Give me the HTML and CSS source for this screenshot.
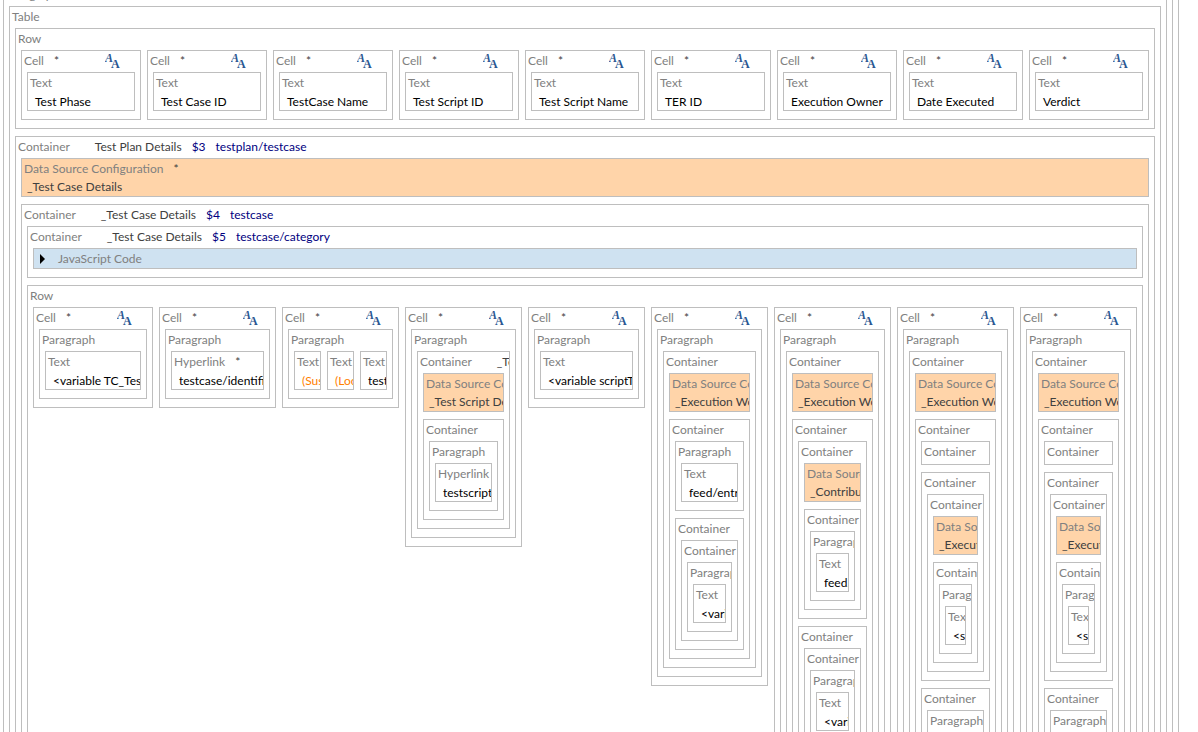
FILE: index.html
```html
<!DOCTYPE html>
<html lang="en">
  <head>
    <meta charset="UTF-8" />
    <meta name="viewport" content="width=device-width, initial-scale=1.0" />
    <title>Document Template</title>
    <link rel="stylesheet" href="styles.css">
  </head>
  <body>
    <svg class="defs" aria-hidden="true">
      <symbol id="style-icon" viewBox="0 0 16 16">
        <text x="0" y="8" class="glyph-small">A</text>
        <text x="6" y="14" class="glyph-big">A</text>
      </symbol>
    </svg>

    <main class="template">
      <div class="box">
        <div class="head"><span>Container</span></div>
        <div class="box">
          <div class="head"><span>Container</span></div>
          <div class="box">
            <div class="head"><span>Paragraph</span></div>
            <div class="box">
              <div class="head"><span>Table</span></div>

              <!-- header row -->
              <div class="box">
                <div class="head"><span>Row</span></div>
                <div class="cells">
                  <div class="box cell">
                    <div class="head"><span>Cell</span><span class="star">*</span><svg class="icon"><use href="#style-icon" /></svg></div>
                    <div class="box text"><div class="head"><span>Text</span></div><p class="value">Test Phase</p></div>
                  </div>
                  <div class="box cell">
                    <div class="head"><span>Cell</span><span class="star">*</span><svg class="icon"><use href="#style-icon" /></svg></div>
                    <div class="box text"><div class="head"><span>Text</span></div><p class="value">Test Case ID</p></div>
                  </div>
                  <div class="box cell">
                    <div class="head"><span>Cell</span><span class="star">*</span><svg class="icon"><use href="#style-icon" /></svg></div>
                    <div class="box text"><div class="head"><span>Text</span></div><p class="value">TestCase Name</p></div>
                  </div>
                  <div class="box cell">
                    <div class="head"><span>Cell</span><span class="star">*</span><svg class="icon"><use href="#style-icon" /></svg></div>
                    <div class="box text"><div class="head"><span>Text</span></div><p class="value">Test Script ID</p></div>
                  </div>
                  <div class="box cell">
                    <div class="head"><span>Cell</span><span class="star">*</span><svg class="icon"><use href="#style-icon" /></svg></div>
                    <div class="box text"><div class="head"><span>Text</span></div><p class="value">Test Script Name</p></div>
                  </div>
                  <div class="box cell">
                    <div class="head"><span>Cell</span><span class="star">*</span><svg class="icon"><use href="#style-icon" /></svg></div>
                    <div class="box text"><div class="head"><span>Text</span></div><p class="value">TER ID</p></div>
                  </div>
                  <div class="box cell">
                    <div class="head"><span>Cell</span><span class="star">*</span><svg class="icon"><use href="#style-icon" /></svg></div>
                    <div class="box text"><div class="head"><span>Text</span></div><p class="value">Execution Owner</p></div>
                  </div>
                  <div class="box cell">
                    <div class="head"><span>Cell</span><span class="star">*</span><svg class="icon"><use href="#style-icon" /></svg></div>
                    <div class="box text"><div class="head"><span>Text</span></div><p class="value">Date Executed</p></div>
                  </div>
                  <div class="box cell">
                    <div class="head"><span>Cell</span><span class="star">*</span><svg class="icon"><use href="#style-icon" /></svg></div>
                    <div class="box text"><div class="head"><span>Text</span></div><p class="value">Verdict</p></div>
                  </div>
                </div>
              </div>

              <!-- test plan details -->
              <div class="box">
                <div class="head"><span>Container</span><span class="source">Test Plan Details</span><span class="query">$3</span><span class="query">testplan/testcase</span></div>
                <div class="box data"><div class="head"><span>Data Source Configuration</span><span class="star">*</span></div><p class="value">_Test Case Details</p></div>

                <div class="box">
                  <div class="head"><span>Container</span><span class="source">_Test Case Details</span><span class="query">$4</span><span class="query">testcase</span></div>

                  <div class="box">
                    <div class="head"><span>Container</span><span class="source">_Test Case Details</span><span class="query">$5</span><span class="query">testcase/category</span></div>
                    <button type="button" class="code" aria-expanded="false"><span class="arrow"></span>JavaScript Code</button>
                  </div>

                  <div class="box">
                    <div class="head"><span>Row</span></div>
                    <div class="cells details">
                      <div class="box cell">
                        <div class="head"><span>Cell</span><span class="star">*</span><svg class="icon"><use href="#style-icon" /></svg></div>
                        <div class="box">
                          <div class="head"><span>Paragraph</span></div>
                          <div class="box text"><div class="head"><span>Text</span></div><p class="value">&lt;variable TC_TestPhase&gt;</p></div>
                        </div>
                      </div>

                      <div class="box cell">
                        <div class="head"><span>Cell</span><span class="star">*</span><svg class="icon"><use href="#style-icon" /></svg></div>
                        <div class="box">
                          <div class="head"><span>Paragraph</span></div>
                          <div class="box text"><div class="head"><span>Hyperlink</span><span class="star">*</span></div><p class="value">testcase/identifier</p></div>
                        </div>
                      </div>

                      <div class="box cell">
                        <div class="head"><span>Cell</span><span class="star">*</span><svg class="icon"><use href="#style-icon" /></svg></div>
                        <div class="box">
                          <div class="head"><span>Paragraph</span></div>
                          <div class="cells">
                            <div class="box text"><div class="head"><span>Text</span></div><p class="value condition">(Suspect)</p></div>
                            <div class="box text"><div class="head"><span>Text</span></div><p class="value condition">(Locked)</p></div>
                            <div class="box text"><div class="head"><span>Text</span></div><p class="value">testcase</p></div>
                          </div>
                        </div>
                      </div>

                      <div class="box cell">
                        <div class="head"><span>Cell</span><span class="star">*</span><svg class="icon"><use href="#style-icon" /></svg></div>
                        <div class="box">
                          <div class="head"><span>Paragraph</span></div>
                          <div class="box">
                            <div class="head"><span>Container</span><span class="source">_Test Script Details</span></div>
                            <div class="box data"><div class="head"><span>Data Source Configuration</span></div><p class="value">_Test Script Details</p></div>
                            <div class="box">
                              <div class="head"><span>Container</span></div>
                              <div class="box">
                                <div class="head"><span>Paragraph</span></div>
                                <div class="box text"><div class="head"><span>Hyperlink</span></div><p class="value">testscript/identifier</p></div>
                              </div>
                            </div>
                          </div>
                        </div>
                      </div>

                      <div class="box cell">
                        <div class="head"><span>Cell</span><span class="star">*</span><svg class="icon"><use href="#style-icon" /></svg></div>
                        <div class="box">
                          <div class="head"><span>Paragraph</span></div>
                          <div class="box text"><div class="head"><span>Text</span></div><p class="value">&lt;variable scriptTitle&gt;</p></div>
                        </div>
                      </div>

                      <div class="box cell">
                        <div class="head"><span>Cell</span><span class="star">*</span><svg class="icon"><use href="#style-icon" /></svg></div>
                        <div class="box">
                          <div class="head"><span>Paragraph</span></div>
                          <div class="box">
                            <div class="head"><span>Container</span></div>
                            <div class="box data"><div class="head"><span>Data Source Configuration</span></div><p class="value">_Execution Work Item</p></div>
                            <div class="box">
                              <div class="head"><span>Container</span></div>
                              <div class="box">
                                <div class="head"><span>Paragraph</span></div>
                                <div class="box text"><div class="head"><span>Text</span></div><p class="value">feed/entry</p></div>
                              </div>
                              <div class="box">
                                <div class="head"><span>Container</span></div>
                                <div class="box">
                                  <div class="head"><span>Container</span></div>
                                  <div class="box">
                                    <div class="head"><span>Paragraph</span></div>
                                    <div class="box text"><div class="head"><span>Text</span></div><p class="value">&lt;variable&gt;</p></div>
                                  </div>
                                </div>
                              </div>
                            </div>
                          </div>
                        </div>
                      </div>

                      <div class="box cell">
                        <div class="head"><span>Cell</span><span class="star">*</span><svg class="icon"><use href="#style-icon" /></svg></div>
                        <div class="box">
                          <div class="head"><span>Paragraph</span></div>
                          <div class="box">
                            <div class="head"><span>Container</span></div>
                            <div class="box data"><div class="head"><span>Data Source Configuration</span></div><p class="value">_Execution Work Item</p></div>
                            <div class="box">
                              <div class="head"><span>Container</span></div>
                              <div class="box">
                                <div class="head"><span>Container</span></div>
                                <div class="box data"><div class="head"><span>Data Source Configuration</span></div><p class="value">_Contributor</p></div>
                                <div class="box">
                                  <div class="head"><span>Container</span></div>
                                  <div class="box">
                                    <div class="head"><span>Paragraph</span></div>
                                    <div class="box text"><div class="head"><span>Text</span></div><p class="value">feed/entry</p></div>
                                  </div>
                                </div>
                              </div>
                              <div class="box">
                                <div class="head"><span>Container</span></div>
                                <div class="box">
                                  <div class="head"><span>Container</span></div>
                                  <div class="box">
                                    <div class="head"><span>Paragraph</span></div>
                                    <div class="box text"><div class="head"><span>Text</span></div><p class="value">&lt;variable&gt;</p></div>
                                  </div>
                                </div>
                              </div>
                            </div>
                          </div>
                        </div>
                      </div>

                      <div class="box cell">
                        <div class="head"><span>Cell</span><span class="star">*</span><svg class="icon"><use href="#style-icon" /></svg></div>
                        <div class="box">
                          <div class="head"><span>Paragraph</span></div>
                          <div class="box">
                            <div class="head"><span>Container</span></div>
                            <div class="box data"><div class="head"><span>Data Source Configuration</span></div><p class="value">_Execution Work Item</p></div>
                            <div class="box">
                              <div class="head"><span>Container</span></div>
                              <div class="box empty"><div class="head"><span>Container</span></div></div>
                              <div class="box">
                                <div class="head"><span>Container</span></div>
                                <div class="box">
                                  <div class="head"><span>Container</span></div>
                                  <div class="box data"><div class="head"><span>Data Source Configuration</span></div><p class="value">_Execution Result</p></div>
                                  <div class="box">
                                    <div class="head"><span>Container</span></div>
                                    <div class="box">
                                      <div class="head"><span>Paragraph</span></div>
                                      <div class="box text"><div class="head"><span>Text</span></div><p class="value">&lt;script&gt;</p></div>
                                    </div>
                                  </div>
                                </div>
                              </div>
                              <div class="box">
                                <div class="head"><span>Container</span></div>
                                <div class="box">
                                  <div class="head"><span>Paragraph</span></div>
                                  <div class="box text"><div class="head"><span>Text</span></div><p class="value">&lt;variable&gt;</p></div>
                                </div>
                              </div>
                            </div>
                          </div>
                        </div>
                      </div>

                      <div class="box cell">
                        <div class="head"><span>Cell</span><span class="star">*</span><svg class="icon"><use href="#style-icon" /></svg></div>
                        <div class="box">
                          <div class="head"><span>Paragraph</span></div>
                          <div class="box">
                            <div class="head"><span>Container</span></div>
                            <div class="box data"><div class="head"><span>Data Source Configuration</span></div><p class="value">_Execution Work Item</p></div>
                            <div class="box">
                              <div class="head"><span>Container</span></div>
                              <div class="box empty"><div class="head"><span>Container</span></div></div>
                              <div class="box">
                                <div class="head"><span>Container</span></div>
                                <div class="box">
                                  <div class="head"><span>Container</span></div>
                                  <div class="box data"><div class="head"><span>Data Source Configuration</span></div><p class="value">_Execution Result</p></div>
                                  <div class="box">
                                    <div class="head"><span>Container</span></div>
                                    <div class="box">
                                      <div class="head"><span>Paragraph</span></div>
                                      <div class="box text"><div class="head"><span>Text</span></div><p class="value">&lt;script&gt;</p></div>
                                    </div>
                                  </div>
                                </div>
                              </div>
                              <div class="box">
                                <div class="head"><span>Container</span></div>
                                <div class="box">
                                  <div class="head"><span>Paragraph</span></div>
                                  <div class="box text"><div class="head"><span>Text</span></div><p class="value">&lt;variable&gt;</p></div>
                                </div>
                              </div>
                            </div>
                          </div>
                        </div>
                      </div>
                    </div>
                  </div>
                </div>
              </div>
            </div>
          </div>
        </div>
      </div>
    </main>
  </body>
</html>
```
FILE: styles.css
```css
* {
  margin: 0;
  padding: 0;
  box-sizing: border-box;
}
body {
  height: 100vh;
  overflow: hidden;
  background: #fff;
  color: #808080;
  font-family: Lato, "Open Sans", sans-serif;
  font-size: 12px;
}
.defs {
  display: none;
}
/* the template is scrolled a little past its outermost boxes */
.template {
  margin: -60px 19px 0 -9px;
}
.box {
  display: flex;
  flex-direction: column;
  gap: 7px;
  min-width: 0;
  padding: 0 5px 8px;
  border: 1px solid #bebebe;
  background: #fff;
  overflow: hidden;
}
.head {
  display: flex;
  flex-shrink: 0;
  gap: 10px;
  height: 21px;
  margin: 0 -3px -7px;
  line-height: 20px;
  white-space: nowrap;
}
.star,
.source {
  color: #404040;
}
.source {
  margin-left: 15px;
}
.query {
  color: #000080;
}
.cells {
  display: grid;
  grid-auto-flow: column;
  grid-auto-columns: minmax(0, 1fr);
  align-items: start;
  gap: 6px;
}
.details {
  grid-template-columns: minmax(0, 120fr) repeat(8, minmax(0, 117fr));
}
.icon {
  width: 16px;
  height: 16px;
  margin: 3px 0 0 36px;
  flex-shrink: 0;
}
.glyph-small,
.glyph-big {
  fill: #2a5791;
  font-family: "Liberation Serif", serif;
  font-weight: bold;
}
.glyph-small {
  font-size: 12px;
  font-style: italic;
}
.glyph-big {
  font-size: 12px;
}
.text,
.data {
  padding-bottom: 0;
}
.value {
  height: 16px;
  line-height: 16px;
  white-space: nowrap;
}
.text .value {
  padding-left: 2px;
  color: #000;
}
.text .condition {
  color: #ff8000;
}
.data {
  background: #ffd4a9;
}
.data .value {
  line-height: 14px;
  color: #404040;
}
.code {
  display: flex;
  align-items: center;
  gap: 13px;
  height: 21px;
  padding: 0 6px;
  border: 1px solid #bebebe;
  background: #cfe2f1;
  color: #808080;
  font: inherit;
  text-align: left;
}
.arrow {
  border: 5px solid transparent;
  border-left-color: #000;
  border-right-width: 0;
}
```
